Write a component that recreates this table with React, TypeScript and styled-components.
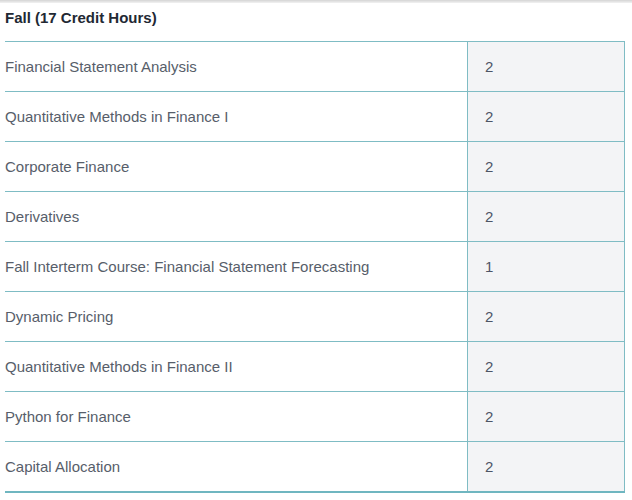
import React from "react";
import styled, { createGlobalStyle } from "styled-components";

const Global = createGlobalStyle`
  html, body { margin: 0; padding: 0; background: #fff; }
  body { font-family: "Liberation Sans", Arial, sans-serif; }
`;

const Page = styled.div`
  width: 632px;
  height: 500px;
  overflow: hidden;
  position: relative;
  background: #fff;
`;

const TopShadow = styled.div`
  height: 3px;
  background: linear-gradient(#d4d4d4, #f2f2f2);
`;

const Section = styled.section`
  padding: 0 7px 0 5px;
`;

const Title = styled.h3`
  margin: 0;
  padding-top: 6px;
  height: 38px;
  box-sizing: border-box;
  font-size: 15px;
  line-height: 17px;
  font-weight: 700;
  color: #222833;
`;

const Table = styled.table`
  width: 620px;
  border-collapse: collapse;
  table-layout: fixed;
`;

const Row = styled.tr`
  height: 50px;
  border-top: 1px solid #7fbcc4;
  border-bottom: 1px solid #7fbcc4;
  &:last-child { border-bottom: 2px solid #6fb6c0; }
`;

const NameCell = styled.td`
  width: 462px;
  padding: 0;
  font-size: 15px;
  color: #575e6a;
  vertical-align: middle;
`;

const HoursCell = styled.td`
  padding: 0 0 0 17px;
  background: #f3f4f6;
  border-left: 1px solid #7fbcc4;
  border-right: 1px solid #7fbcc4;
  font-size: 15px;
  color: #4d5566;
  vertical-align: middle;
`;

const courses: [string, number][] = [
  ["Financial Statement Analysis", 2],
  ["Quantitative Methods in Finance I", 2],
  ["Corporate Finance", 2],
  ["Derivatives", 2],
  ["Fall Interterm Course: Financial Statement Forecasting", 1],
  ["Dynamic Pricing", 2],
  ["Quantitative Methods in Finance II", 2],
  ["Python for Finance", 2],
  ["Capital Allocation", 2],
];

export default function App() {
  return (
    <Page>
      <Global />
      <TopShadow />
      <Section>
        <Title>Fall (17 Credit Hours)</Title>
        <Table>
          <tbody>
            {courses.map(([name, hrs]) => (
              <Row key={name}>
                <NameCell>{name}</NameCell>
                <HoursCell>{hrs}</HoursCell>
              </Row>
            ))}
          </tbody>
        </Table>
      </Section>
    </Page>
  );
}
